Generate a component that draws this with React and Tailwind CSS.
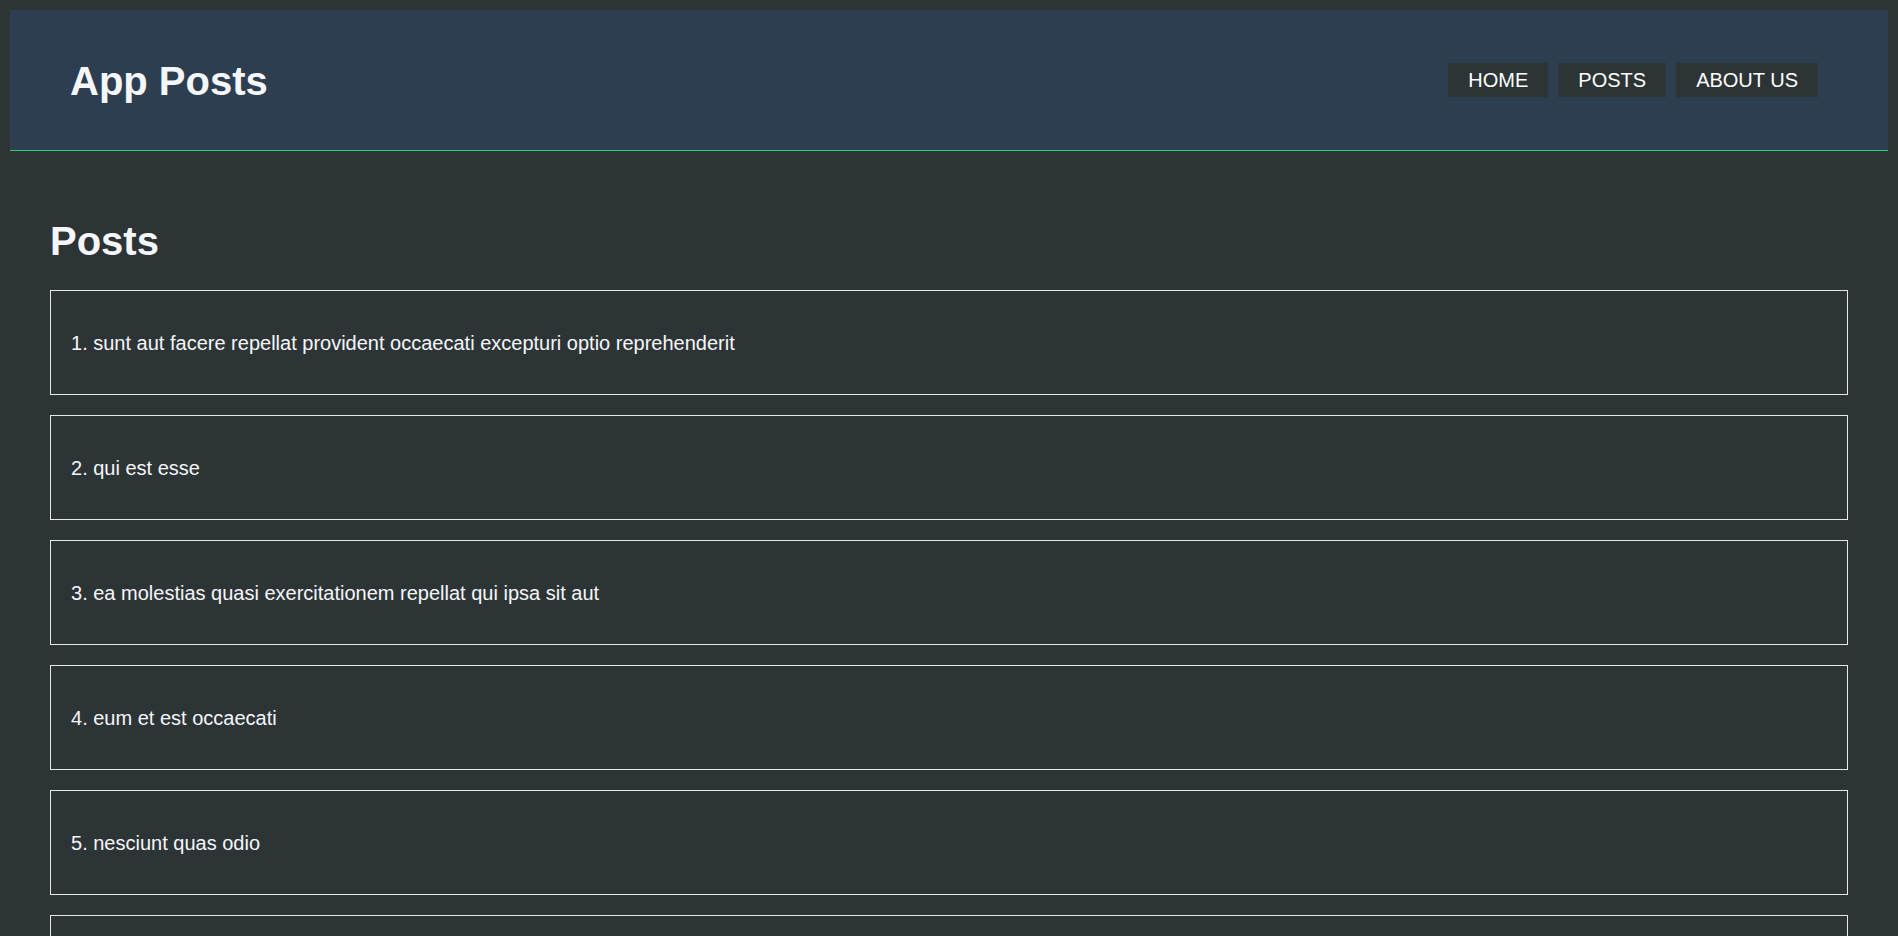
import React from "react";

const posts = [
  { id: 1, title: "sunt aut facere repellat provident occaecati excepturi optio reprehenderit" },
  { id: 2, title: "qui est esse" },
  { id: 3, title: "ea molestias quasi exercitationem repellat qui ipsa sit aut" },
  { id: 4, title: "eum et est occaecati" },
  { id: 5, title: "nesciunt quas odio" },
  { id: 6, title: "dolorem eum magni eos aperiam quia" },
  { id: 7, title: "magnam facilis autem" },
  { id: 8, title: "dolorem dolore est ipsam" },
  { id: 9, title: "nesciunt iure omnis dolorem tempora et accusantium" },
  { id: 10, title: "optio molestias id quia eum" },
];

const links = ["HOME", "POSTS", "ABOUT US"];

export default function App() {
  return (
    <div className="min-h-screen bg-[#2d3436] p-[10px] font-['Liberation_Sans',Arial,sans-serif] text-[#f5f6fa]">
      {/* Header */}
      <header className="flex h-[141px] items-center justify-between border-b border-[#2ecc71] bg-[#2c3e50] px-[60px]">
        <h1 className="pt-[2px] text-[40px] font-bold leading-[46px]">App Posts</h1>
        <nav className="flex">
          {links.map((link) => (
            <a
              key={link}
              href="#"
              className="mr-[10px] bg-[#2d3436] px-[20px] py-[5px] text-[20px] leading-[24px] text-white"
            >
              {link}
            </a>
          ))}
        </nav>
      </header>

      {/* Posts */}
      <main className="p-[40px]">
        <h1 className="mt-[27px] mb-[26px] text-[40px] font-bold leading-[46px]">Posts</h1>
        <div className="flex flex-col gap-[20px]">
          {posts.map((post) => (
            <div key={post.id} className="border border-[#e8e8e8] px-[20px] pt-[41px] pb-[39px]">
              <p className="text-[20px] leading-[23px]">
                {post.id}. {post.title}
              </p>
            </div>
          ))}
        </div>
      </main>
    </div>
  );
}
